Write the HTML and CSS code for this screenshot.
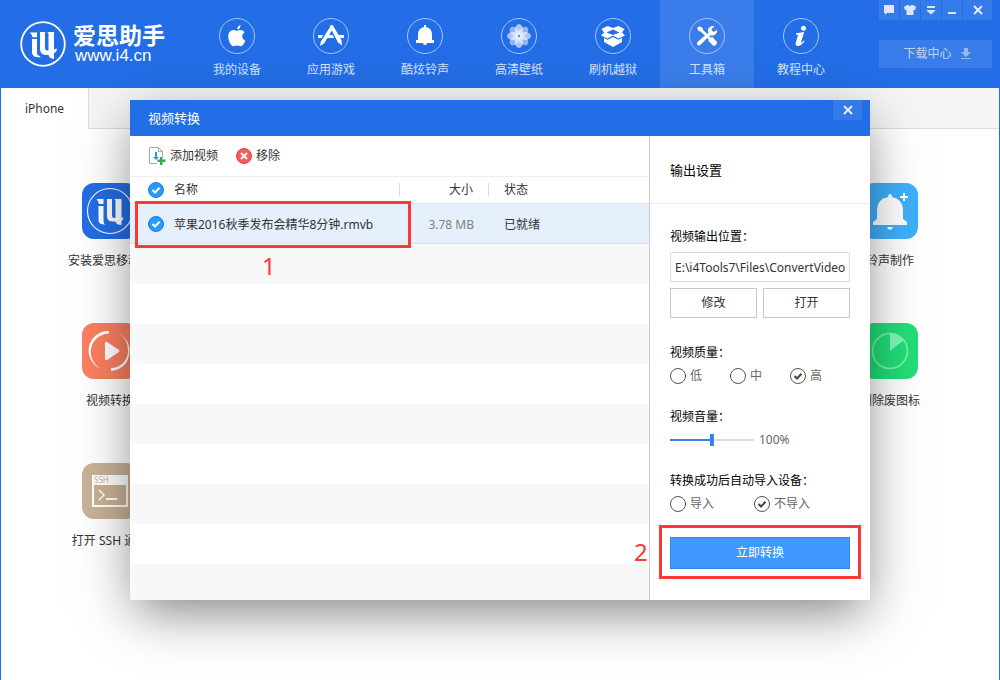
FILE: index.html
```html
<!DOCTYPE html>
<html lang="zh-CN">
<head>
<meta charset="utf-8">
<title>爱思助手</title>
<link rel="stylesheet" href="styles.css">
</head>
<body>
<svg class="defs" width="0" height="0" aria-hidden="true">
  <symbol id="i4" viewBox="0 0 46 46">
    <circle cx="23" cy="23" r="21.8" fill="none" stroke="#fff" stroke-width="1.8"/>
    <path fill="#fff" d="M9.800 11.500H17V16.300H12.500Q12 13 9.800 11.500ZM12 18H17V31.500Q17 35 20.200 35V36.200Q12 37 12 31Z"/>
    <path fill="#fff" d="M20 11H25V27.500Q25 29.500 27.200 29.500H28.500V13Q28.500 11.500 27 11H34V28.500L37 27.500Q36.500 31.500 34 32V38Q29 37.500 28.500 34H25.500Q20 33.500 20 28Z"/>
  </symbol>
</svg>

<div class="window">
  <header class="header">
    <a class="brand" href="#">
      <svg class="brand-mark" viewBox="0 0 46 46"><use href="#i4"/></svg>
      <span class="brand-text">
        <span class="brand-name">爱思助手</span>
        <span class="brand-url">www.i4.cn</span>
      </span>
    </a>
    <nav class="nav">
      <a class="nav-item" href="#">
        <svg class="nav-icon" viewBox="0 0 36 36"><circle class="ring" cx="18" cy="18" r="17.500"/><path fill="#fff" d="M21.500 7Q21.700 10.500 18.300 11.700Q18 8.300 21.500 7ZM18 13Q19.500 12 21.500 12Q24.300 12 25.600 14.300Q23 16 23.200 18.500Q23.400 21.500 26.300 22.700Q24 28.200 21.400 28.200Q20 27.500 18 27.500Q16 27.500 14.500 28.200Q11.500 28 9.700 22Q8.300 16.500 10.700 13.700Q13 11.200 16 12.300Z"/></svg>
        <span>我的设备</span>
      </a>
      <a class="nav-item" href="#">
        <svg class="nav-icon" viewBox="0 0 36 36"><circle class="ring" cx="18" cy="18" r="17.500"/><g fill="#fff"><path d="M5 17H10L8.700 20H5ZM15 17H19.700L21.300 20H13.500ZM25 17H31V20H26.700ZM19 8L21 9L11 25.500L7 28L7.800 23.700L16 10.500ZM16.500 8L19.500 6.800L28.500 22L29 27.500L25 24.500Z"/></g></svg>
        <span>应用游戏</span>
      </a>
      <a class="nav-item" href="#">
        <svg class="nav-icon" viewBox="0 0 36 36"><circle class="ring" cx="18" cy="18" r="17.500"/><path fill="#fff" d="M17 7H19V9Q25 10 25 17V22H27V25H20Q20 27 18 27Q16 27 16 25H9V22H11V17Q11 10 17 9Z"/></svg>
        <span>酷炫铃声</span>
      </a>
      <a class="nav-item" href="#">
        <svg class="nav-icon" viewBox="0 0 36 36"><circle class="ring" cx="18" cy="18" r="17.500"/><g fill="#fff" fill-opacity=".6"><ellipse cx="18" cy="12" rx="4" ry="6"/><ellipse cx="18" cy="24" rx="4" ry="6"/><ellipse cx="12" cy="18" rx="6" ry="4"/><ellipse cx="24" cy="18" rx="6" ry="4"/></g><g fill="#fff" fill-opacity=".5" transform="rotate(45 18 18)"><ellipse cx="18" cy="12" rx="4" ry="6"/><ellipse cx="18" cy="24" rx="4" ry="6"/><ellipse cx="12" cy="18" rx="6" ry="4"/><ellipse cx="24" cy="18" rx="6" ry="4"/></g><circle cx="18" cy="18" r="1.200" fill="#4d89ec"/></svg>
        <span>高清壁纸</span>
      </a>
      <a class="nav-item" href="#">
        <svg class="nav-icon" viewBox="0 0 36 36"><circle class="ring" cx="18" cy="18" r="17.500"/><path fill="#fff" fill-rule="evenodd" d="M12.500 8L18 10L23.500 8L29.500 11L27 14.500L30 17.500L23.500 20.500L18 17.500L12.500 20.500L6 17.500L9 14.500L6.500 11ZM18 11.500L11.500 14.500L18 17L24.500 14.500ZM9 20L12.500 21.800L18 19L23.500 21.800L27 20V24L18 29L9 24Z"/></svg>
        <span>刷机越狱</span>
      </a>
      <a class="nav-item nav-active" href="#">
        <svg class="nav-icon" viewBox="0 0 36 36"><circle class="ring" cx="18" cy="18" r="17.500"/><path fill="#fff" d="M8 10L10.500 8.200L13.500 10L14 12L18.300 16L19.500 14.800Q18 11 20.800 9Q23 7.500 25.500 8.300L22.500 11L23.500 13.500L26 13.500L28 11.500Q28.800 14.500 26.500 16.500Q24.500 18 21.500 17.200L20.300 18.500L21.500 19.400L23.500 19L28 24Q28 27.500 24.500 28L19.500 23V21L18.200 20L11.800 26.500Q9.800 28.300 8.200 26.800Q7.300 25 9 23.500L16 17.500L11.500 13.500L9.500 13Z"/></svg>
        <span>工具箱</span>
      </a>
      <a class="nav-item" href="#">
        <svg class="nav-icon" viewBox="0 0 36 36"><circle class="ring" cx="18" cy="18" r="17.500"/><circle cx="20.500" cy="10.300" r="2.500" fill="#fff"/><path fill="#fff" d="M13 15.200Q17 15 21.200 13.700L18 24.500Q18 25.700 20.800 22.500L21.500 23.200Q18 28 15 28Q12 28 12.700 25L15 17.300Q14.700 16.500 13 16.500Z"/></svg>
        <span>教程中心</span>
      </a>
    </nav>
    <div class="controls">
      <div class="control-row">
        <button class="control" aria-label="反馈"><svg width="12" height="12" viewBox="0 0 12 12"><path fill="#d9e6fb" d="M1 1H11V9H4L2 11V9H1Z"/></svg></button>
        <button class="control" aria-label="皮肤"><svg width="12" height="12" viewBox="0 0 12 12"><path fill="#d9e6fb" d="M0 3L3 1H4.500Q6 3 7.500 1H9L12 3L11 6H9.500V11H2.500V6H1Z"/></svg></button>
        <button class="control" aria-label="菜单"><svg width="12" height="12" viewBox="0 0 12 12"><path fill="#d9e6fb" d="M2 2H10V4H2ZM2 6H10V7L6 10.500L2 7Z"/></svg></button>
        <button class="control" aria-label="最小化"><svg width="12" height="12" viewBox="0 0 12 12"><path fill="#d9e6fb" d="M2 8H10V10H2Z"/></svg></button>
        <button class="control control-close" aria-label="关闭"><svg width="12" height="12" viewBox="0 0 12 12"><path stroke="#e4edfc" stroke-width="2" d="M2 2L10 10M10 2L2 10"/></svg></button>
      </div>
      <button class="download">下载中心<svg width="12" height="12" viewBox="0 0 12 12"><path fill="#95b9f5" d="M4 0H8V4H11L6 9L1 4H4ZM1 10H11V11H1Z"/></svg></button>
    </div>
  </header>

  <div class="tabs"><a class="tab" href="#">iPhone</a></div>

  <main class="tools">
    <a class="tool" href="#">
      <svg class="tool-icon" viewBox="0 0 56 56"><rect width="56" height="56" rx="12" fill="#236ee6"/><circle cx="28" cy="28" r="22.500" fill="none" stroke="#fff" stroke-width="1.100"/><path fill="#fff" d="M14.500 16H21.500V21H17Q16 17.500 14.500 16ZM16.500 23H21.500V37Q21.500 41.500 24 41.500Q16.500 42 16.500 37ZM25 16H30V33Q30 35 32.500 35H33.500V18Q33.500 16 32 16H39.500V35L41.500 34Q41 37.500 39.500 38V42Q34 42 33.500 38.500H30Q25 38 25 33Z"/></svg>
      <span>安装爱思移动端</span>
    </a>
    <a class="tool" href="#">
      <svg class="tool-icon" viewBox="0 0 56 56"><rect width="56" height="56" rx="12" fill="#3fb0fc"/><path fill="#fff" d="M28 11Q30 11 30 14Q41 16 41 27V36L45 39V42H11V39L15 36V27Q15 16 26 14Q26 11 28 11ZM25 44H31Q30 47 28 47Q26 47 25 44ZM41 10H43V13H46V15H43V18H41V15H38V13H41Z"/></svg>
      <span>铃声制作</span>
    </a>
    <a class="tool" href="#">
      <svg class="tool-icon" viewBox="0 0 56 56"><rect width="56" height="56" rx="12" fill="#fa7f60"/><path fill="#fff" d="M27 8V10.500A18.500 18.500 0 0 0 20 46A19.500 19.500 0 0 1 27 8ZM23 20Q23 18 25 19L37 27Q38 28 37 29L25 37Q23 38 23 36ZM29 45A17 17 0 0 0 46 28Q46 15 36 10Q48 16 47.500 29Q46 46 29 48Z"/></svg>
      <span>视频转换</span>
    </a>
    <a class="tool" href="#">
      <svg class="tool-icon" viewBox="0 0 56 56"><rect width="56" height="56" rx="12" fill="#21de78"/><circle cx="28" cy="28" r="17.500" fill="none" stroke="#7cf3b0" stroke-width="1.500"/><path fill="#7cf9b6" d="M28 28V10.500A18 18 0 0 1 41.500 17.500Z"/></svg>
      <span>删除废图标</span>
    </a>
    <a class="tool" href="#">
      <svg class="tool-icon" viewBox="0 0 56 56"><rect width="56" height="56" rx="12" fill="#c8b297"/><path fill="#fff" fill-rule="evenodd" d="M10 12H46V44H10ZM12 22V42H44V22Z"/><text x="12" y="20" class="ssh">SSH</text><path fill="none" stroke="#fff" stroke-width="1.400" d="M17 27L22 32L17 37"/><path fill="#fff" d="M24 35H35V37H24Z"/></svg>
      <span>打开 SSH 通道</span>
    </a>
  </main>

  <div class="overlay">
    <section class="dialog" role="dialog" aria-labelledby="dialog-title">
      <div class="titlebar">
        <h1 class="title" id="dialog-title">视频转换</h1>
        <button class="control control-close" aria-label="关闭窗口"><svg width="12" height="12" viewBox="0 0 12 12"><path stroke="#e4edfc" stroke-width="2" d="M2 2L10 10M10 2L2 10"/></svg></button>
      </div>
      <div class="content">
        <div class="files">
          <div class="toolbar">
            <button class="action"><svg width="18" height="18" viewBox="0 0 18 18"><path fill="#fff" stroke="#aaa" d="M10.500 .5H1.500V16.500H9M10.500 .5L14.500 4.500V10M10.500 .5V4.500H14.500"/><path fill="#2f95f5" d="M7 5H9V10H11L8 13L5 10H7Z"/><path fill="#35ac4b" d="M12 10H14.500V12.500H17.500V15H14.500V18H12V15H9.500V12.500H12Z"/></svg>添加视频</button>
            <button class="action"><svg width="16" height="16" viewBox="0 0 16 16"><circle cx="8" cy="8" r="7.500" fill="#f95a5d" stroke="#dc4045"/><path stroke="#fff" stroke-width="2" d="M5 5L11 11M11 5L5 11"/></svg>移除</button>
          </div>
          <table class="table">
            <colgroup><col class="col-check"><col class="col-name"><col class="col-size"><col></colgroup>
            <thead>
              <tr>
                <th class="cell-check"><input class="check" type="checkbox" aria-label="全选" checked></th>
                <th><span class="divided">名称</span></th>
                <th class="cell-size"><span class="divided">大小</span></th>
                <th class="cell-status">状态</th>
              </tr>
            </thead>
            <tbody>
              <tr>
                <td class="cell-check"><input class="check" id="file" type="checkbox" checked></td>
                <td><label for="file">苹果2016秋季发布会精华8分钟.rmvb</label></td>
                <td class="cell-size"><span class="size">3.78 MB</span></td>
                <td class="cell-status">已就绪</td>
              </tr>
            </tbody>
          </table>
          <div class="stripes"></div>
        </div>
        <form class="settings">
          <h2 class="settings-title">输出设置</h2>
          <div class="settings-body">
            <div class="group">
              <label class="caption" for="path">视频输出位置：</label>
              <div class="location">
                <input class="path" id="path" type="text" value="E:\i4Tools7\Files\ConvertVideo">
                <button class="plain" type="button">修改</button>
                <button class="plain" type="button">打开</button>
              </div>
            </div>
            <div class="group" role="radiogroup" aria-labelledby="quality">
              <span class="caption" id="quality">视频质量：</span>
              <div class="options thirds">
                <label class="option"><input class="radio" type="radio" name="quality">低</label>
                <label class="option"><input class="radio" type="radio" name="quality">中</label>
                <label class="option"><input class="radio" type="radio" name="quality" checked>高</label>
              </div>
            </div>
            <div class="group">
              <label class="caption" for="volume">视频音量：</label>
              <div class="volume">
                <input class="slider" id="volume" type="range" min="0" max="200" value="100">
                <output for="volume">100%</output>
              </div>
            </div>
            <div class="group" role="radiogroup" aria-labelledby="import">
              <span class="caption" id="import">转换成功后自动导入设备：</span>
              <div class="options halves">
                <label class="option"><input class="radio" type="radio" name="import">导入</label>
                <label class="option"><input class="radio" type="radio" name="import" checked>不导入</label>
              </div>
            </div>
            <div class="submit-wrap">
              <button class="submit" type="button">立即转换</button>
              <div class="mark mark-submit"></div>
              <span class="step step-two">2</span>
            </div>
          </div>
        </form>
      </div>
      <div class="mark mark-file"></div>
      <span class="step step-one">1</span>
    </section>
  </div>
</div>
</body>
</html>
```
FILE: styles.css
```css
* {
  box-sizing: border-box;
}

body {
  margin: 0;
  background: #fff;
  color: #333;
  font: 12px/16px "Noto Sans", "Noto Sans CJK SC", sans-serif;
}

button,
input {
  margin: 0;
  font: inherit;
  color: inherit;
}

button {
  padding: 0;
  border: 0;
  background: none;
}

a {
  color: inherit;
  text-decoration: none;
}

svg {
  display: block;
  flex: none;
}

.defs {
  position: absolute;
}

.window {
  position: relative;
  min-height: 100vh;
  overflow: hidden;
  border: solid #236ee6;
  border-width: 0 1px;
}

/* Header */

.header {
  display: flex;
  height: 88px;
  padding-right: 7px;
  background: #236ee6;
}

.brand {
  display: flex;
  align-items: center;
  gap: 7px;
  width: 189px;
  padding-left: 19px;
  color: #fff;
}

.brand-mark {
  width: 46px;
  height: 46px;
}

.brand-text {
  display: flex;
  flex-direction: column;
}

.brand-name {
  font: 700 23px/24px "Noto Sans CJK SC", sans-serif;
}

.brand-url {
  padding-left: 2px;
  font: 17px/20px "Liberation Sans", sans-serif;
}

.nav {
  display: flex;
  flex: 1;
}

.nav-item {
  display: flex;
  flex-direction: column;
  align-items: center;
  gap: 8px;
  width: 94px;
  padding-top: 18px;
  color: #d3e2fa;
}

.nav-active {
  background: #3a7dea;
}

.nav-icon {
  width: 36px;
  height: 36px;
}

.ring {
  fill: none;
  stroke: #a7c5f5;
}

.controls {
  display: flex;
  flex-direction: column;
  gap: 20px;
}

.control-row {
  display: flex;
  gap: 1px;
}

.control {
  display: flex;
  align-items: center;
  justify-content: center;
  width: 20px;
  height: 20px;
  background: #347ae9;
}

.control-close {
  width: 29px;
}

.download {
  display: flex;
  align-items: center;
  justify-content: center;
  gap: 8px;
  height: 28px;
  padding-left: 4px;
  background: #3a7dea;
  color: #bdd4f8;
}

/* Tabs and tools */

.tabs {
  display: flex;
  height: 41px;
  border-bottom: 1px solid #dcdcdc;
  background: #f5f5f5;
}

.tab {
  width: 88px;
  height: 41px;
  border-right: 1px solid #dcdcdc;
  background: #fff;
  line-height: 41px;
  text-align: center;
}

.tools {
  display: grid;
  grid-template-columns: 100px 100px;
  justify-content: space-between;
  row-gap: 54px;
  padding: 54px 59px;
}

.tool {
  display: flex;
  flex-direction: column;
  align-items: center;
  gap: 14px;
  white-space: nowrap;
}

.tool-icon {
  width: 56px;
  height: 56px;
}

.ssh {
  fill: #c8b297;
  font: 8px "Noto Sans", sans-serif;
}

/* Dialog */

.overlay {
  position: absolute;
  inset: 0;
  display: flex;
  padding: 100px 129px 80px;
}

.dialog {
  position: relative;
  display: flex;
  flex: 1;
  flex-direction: column;
  background: #fff;
  box-shadow: 0 16px 50px -5px rgba(0, 0, 0, 0.5);
}

.titlebar {
  display: flex;
  justify-content: space-between;
  height: 36px;
  padding: 0 8px 0 18px;
  background: #236ee6;
  color: #fff;
}

.title {
  margin: 0;
  font-size: 13px;
  font-weight: 400;
  line-height: 36px;
}

.content {
  display: flex;
  flex: 1;
}

.files {
  display: flex;
  flex: 1;
  flex-direction: column;
}

.toolbar {
  display: flex;
  gap: 18px;
  height: 41px;
  padding-left: 18px;
  border-bottom: 1px solid #f0f0f0;
}

.action {
  display: flex;
  align-items: center;
  gap: 4px;
}

.table {
  width: 100%;
  border-collapse: separate;
  border-spacing: 0;
  table-layout: fixed;
}

.col-check {
  width: 44px;
}

.col-name {
  width: 226px;
}

.col-size {
  width: 89px;
}

.table th,
.table td {
  padding: 0;
  font-weight: 400;
  text-align: left;
  white-space: nowrap;
}

.table th {
  height: 27px;
  border-bottom: 1px solid #e2e6ea;
}

.table td {
  height: 40px;
  padding-top: 2px;
  border-bottom: 1px solid #dae2ea;
  background: #e5f0fc;
}

.table .cell-check {
  padding-top: 0;
  padding-left: 18px;
}

.table .cell-size {
  text-align: right;
}

.table .cell-status {
  padding-left: 15px;
}

.divided {
  display: block;
  padding-right: 15px;
  border-right: 1px solid #ddd;
  line-height: 14px;
}

.size {
  padding-right: 15px;
  color: #808080;
}

.check,
.radio {
  display: block;
  flex: none;
  width: 16px;
  height: 16px;
  appearance: none;
  border-radius: 50%;
}

.check {
  border: 1px solid #1c80dd;
  background: #2b98fa;
}

.check:checked {
  background: #2b98fa url("data:image/svg+xml,%3Csvg xmlns='http://www.w3.org/2000/svg' viewBox='0 0 14 14'%3E%3Cpath fill='none' stroke='white' stroke-width='2' d='M3.500 7L6 9.500L10.500 4.800'/%3E%3C/svg%3E") center / 14px;
}

.radio {
  border: 1px solid #555;
}

.radio:checked {
  background: url("data:image/svg+xml,%3Csvg xmlns='http://www.w3.org/2000/svg' viewBox='0 0 14 14'%3E%3Cpath fill='none' stroke='%23444' stroke-width='2' d='M3.500 7L6 9.500L10.500 4.800'/%3E%3C/svg%3E") center / 14px;
}

.stripes {
  flex: 1;
  background: repeating-linear-gradient(#f8f8f8 0 40px, #fff 40px 80px);
}

/* Settings */

.settings {
  width: 221px;
  border-left: 1px solid #ccc;
}

.settings-title {
  height: 68px;
  margin: 0;
  padding-left: 20px;
  border-bottom: 1px solid #eee;
  color: #000;
  font-size: 13px;
  font-weight: 400;
  line-height: 68px;
}

.settings-body {
  display: flex;
  flex-direction: column;
  gap: 25px;
  padding: 25px 20px 30px;
}

.group {
  display: flex;
  flex-direction: column;
  gap: 7px;
}

.caption {
  color: #000;
}

.location {
  display: grid;
  grid-template-columns: 1fr 1fr;
  gap: 6px;
  padding-bottom: 2px;
}

.path {
  grid-column: 1 / -1;
  width: 100%;
  height: 30px;
  padding: 0 0 0 4px;
  border: 1px solid #dcdcdc;
}

.plain {
  height: 30px;
  border: 1px solid #c8c8c8;
  background: #fff;
}

.options {
  display: grid;
  color: #666;
}

.thirds {
  grid-template-columns: repeat(3, 60px);
}

.halves {
  grid-template-columns: repeat(2, 84px);
}

.option {
  display: flex;
  gap: 4px;
}

.volume {
  display: flex;
  gap: 5px;
  color: #666;
}

.slider {
  width: 84px;
  height: 16px;
  appearance: none;
  background: linear-gradient(90deg, #3b82ea 50%, #dcdcdc 50%) center / 100% 2px no-repeat;
}

.slider::-webkit-slider-thumb {
  width: 4px;
  height: 12px;
  appearance: none;
  background: #3b82ea;
}

.submit-wrap {
  position: relative;
}

.submit {
  width: 100%;
  height: 32px;
  border: 1px solid #2b8bf5;
  background: #3f99fe;
  color: #fff;
}

/* Step annotations */

.mark {
  position: absolute;
  border: 3px solid #fc3837;
  pointer-events: none;
}

.mark-file {
  top: 101px;
  left: 5px;
  width: 276px;
  height: 47px;
}

.mark-submit {
  inset: -12px -11px -10px;
}

.step {
  position: absolute;
  color: #fc3837;
  font-size: 24px;
  line-height: 24px;
}

.step-one {
  top: 154px;
  left: 132px;
}

.step-two {
  top: 3px;
  left: -36px;
}
```
